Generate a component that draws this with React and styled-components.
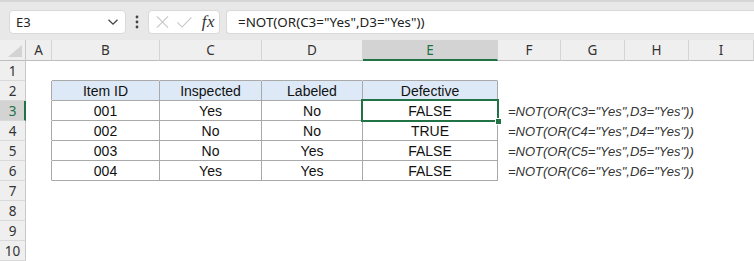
import React from "react";
import styled, { createGlobalStyle, css } from "styled-components";

const GREEN = "#217346";

const GlobalStyle = createGlobalStyle`
  html, body { margin: 0; padding: 0; background: #ffffff; }
  body { overflow: hidden; }
  * { box-sizing: border-box; }
`;

const Page = styled.div`
  width: 754px;
  height: 261px;
  display: flex;
  flex-direction: column;
  overflow: hidden;
  font-family: "Liberation Sans", Arial, sans-serif;
`;

const FormulaBar = styled.div`
  height: 40px;
  flex: none;
  display: flex;
  align-items: center;
  padding: 1px 0 0 9px;
  background: #e8e8e8;
  border-top: 2px solid #d6d6d6;
`;

const NameBox = styled.div`
  width: 117px;
  height: 24px;
  background: #ffffff;
  border: 1px solid #d9d9d9;
  border-radius: 4px;
  display: flex;
  align-items: center;
  justify-content: space-between;
  padding: 0 6px 0 6px;
  font-family: "Noto Sans", "Open Sans", sans-serif;
  font-size: 13px;
  color: #222;
`;

const Dots = styled.div`
  width: 22px;
  display: flex;
  justify-content: center;
  color: #444;
`;

const FxBox = styled.div`
  width: 72px;
  height: 24px;
  background: #ffffff;
  border: 1px solid #d9d9d9;
  border-radius: 4px;
  display: flex;
  align-items: center;
  padding: 0 4px 0 6px;
  gap: 6px;
`;

const Fx = styled.span`
  font-family: "Liberation Serif", "Times New Roman", serif;
  font-style: italic;
  font-size: 17px;
  color: #333;
  margin-left: 3px;
  letter-spacing: 0.5px;
`;

const FormulaInput = styled.div`
  flex: 1;
  height: 24px;
  margin-left: 6px;
  background: #ffffff;
  border: 1px solid #d9d9d9;
  border-right: none;
  border-radius: 4px 0 0 4px;
  display: flex;
  align-items: center;
  padding-left: 11px;
  font-family: "Noto Sans", "Open Sans", sans-serif;
  font-size: 13.4px;
  color: #222;
`;

const Sheet = styled.div`
  flex: 1;
  display: grid;
  background: #ffffff;
  grid-template-columns: 26px 26px 108px 102px 101px 135px 63px 64px 64px 1fr;
  grid-template-rows: 21px repeat(10, 20px);
`;

const headerFont = css`
  font-family: "Noto Sans", "Open Sans", sans-serif;
  font-size: 13.5px;
`;

const Corner = styled.div`
  position: relative;
  background: #efefef;
  border-right: 1px solid #c8c8c8;
  border-bottom: 1px solid #bdbdbd;
  &::after {
    content: "";
    position: absolute;
    right: 3px;
    bottom: 3px;
    width: 0;
    height: 0;
    border-left: 14px solid transparent;
    border-bottom: 12px solid #d3d3d3;
  }
`;

const ColHeader = styled.div`
  ${headerFont};
  display: flex;
  align-items: center;
  justify-content: center;
  background: ${(p) => (p.$active ? "#d3d3d3" : "#efefef")};
  color: ${(p) => (p.$active ? GREEN : "#333")};
  border-right: 1px solid #d4d4d4;
  border-bottom: ${(p) => (p.$active ? `2px solid ${GREEN}` : "1px solid #bdbdbd")};
  padding-top: ${(p) => (p.$active ? "1px" : "0")};
`;

const RowHeader = styled.div`
  ${headerFont};
  display: flex;
  align-items: center;
  justify-content: center;
  background: ${(p) => (p.$active ? "#d3d3d3" : "#efefef")};
  color: ${(p) => (p.$active ? GREEN : "#333")};
  border-right: ${(p) => (p.$active ? `2px solid ${GREEN}` : "1px solid #c8c8c8")};
  border-bottom: 1px solid #d9d9d9;
  padding-left: ${(p) => (p.$active ? "1px" : "0")};
`;

const LINE = "#a9a9a9";

const Cell = styled.div`
  position: relative;
  display: flex;
  align-items: center;
  justify-content: ${(p) => (p.$left ? "flex-start" : "center")};
  padding-left: ${(p) => (p.$left ? "10px" : "0")};
  padding-top: 1px;
  white-space: nowrap;
  overflow: visible;
  font-family: "Liberation Sans", Arial, sans-serif;
  font-size: ${(p) => (p.$italic ? "13px" : "14px")};
  font-style: ${(p) => (p.$italic ? "italic" : "normal")};
  color: ${(p) => (p.$italic ? "#333" : "#111")};
  background: ${(p) => (p.$fill ? "#dde9f6" : "transparent")};
  border-right: 1px solid ${(p) => (p.$bR ? LINE : "transparent")};
  border-bottom: 1px solid ${(p) => (p.$bB ? LINE : "transparent")};
  z-index: ${(p) => (p.$selected ? 2 : "auto")};
`;

const Selection = styled.div`
  position: absolute;
  top: -2px;
  left: -2px;
  right: -2px;
  bottom: -2px;
  border: 2px solid ${GREEN};
  pointer-events: none;
`;

const Handle = styled.div`
  position: absolute;
  right: -5px;
  bottom: -5px;
  width: 7px;
  height: 7px;
  background: ${GREEN};
  border: 1px solid #ffffff;
`;

const COLS = ["A", "B", "C", "D", "E", "F", "G", "H", "I"];

const TABLE = [
  ["Item ID", "Inspected", "Labeled", "Defective"],
  ["001", "Yes", "No", "FALSE"],
  ["002", "No", "No", "TRUE"],
  ["003", "No", "Yes", "FALSE"],
  ["004", "Yes", "Yes", "FALSE"],
];

const formula = (r) => `=NOT(OR(C${r}="Yes",D${r}="Yes"))`;

function ChevronDown() {
  return (
    <svg width="12" height="8" viewBox="0 0 12 8" fill="none">
      <path d="M1.5 1.8 L6 6.2 L10.5 1.8" stroke="#444" strokeWidth="1.3" />
    </svg>
  );
}

function VDots() {
  return (
    <svg width="4" height="14" viewBox="0 0 4 14">
      <circle cx="2" cy="2" r="1.4" fill="#444" />
      <circle cx="2" cy="7" r="1.4" fill="#444" />
      <circle cx="2" cy="12" r="1.4" fill="#444" />
    </svg>
  );
}

function CancelIcon() {
  return (
    <svg width="16" height="16" viewBox="0 0 16 16" fill="none">
      <path d="M2 2 L14 14 M14 2 L2 14" stroke="#c4c4c4" strokeWidth="1.1" />
    </svg>
  );
}

function EnterIcon() {
  return (
    <svg width="18" height="16" viewBox="0 0 18 16" fill="none">
      <path d="M1.5 8.5 L6.5 13.5 L16.5 3" stroke="#c4c4c4" strokeWidth="1.1" />
    </svg>
  );
}

export default function App() {
  const rows = [];
  for (let r = 1; r <= 10; r++) {
    const cells = [];
    cells.push(
      <RowHeader key="h" $active={r === 3}>
        {r}
      </RowHeader>
    );
    COLS.forEach((c, ci) => {
      const inTable = r >= 2 && r <= 6 && ci >= 1 && ci <= 4;
      const leftOfTable = r >= 2 && r <= 6 && ci === 0;
      const aboveTable = r === 1 && ci >= 1 && ci <= 4;
      let content = null;
      let italic = false;
      let left = false;
      if (inTable) content = TABLE[r - 2][ci - 1];
      if (ci === 5 && r >= 3 && r <= 6) {
        content = formula(r);
        italic = true;
        left = true;
      }
      const selected = r === 3 && c === "E";
      cells.push(
        <Cell
          key={c}
          $bR={inTable || leftOfTable}
          $bB={inTable || aboveTable}
          $fill={inTable && r === 2}
          $italic={italic}
          $left={left}
          $selected={selected}
        >
          {content}
          {selected && (
            <Selection>
              <Handle />
            </Selection>
          )}
        </Cell>
      );
    });
    rows.push(<React.Fragment key={r}>{cells}</React.Fragment>);
  }

  return (
    <>
      <GlobalStyle />
      <Page>
        <FormulaBar>
          <NameBox>
            <span>E3</span>
            <ChevronDown />
          </NameBox>
          <Dots>
            <VDots />
          </Dots>
          <FxBox>
            <CancelIcon />
            <EnterIcon />
            <Fx>fx</Fx>
          </FxBox>
          <FormulaInput>=NOT(OR(C3="Yes",D3="Yes"))</FormulaInput>
        </FormulaBar>
        <Sheet>
          <Corner />
          {COLS.map((c) => (
            <ColHeader key={c} $active={c === "E"}>
              {c}
            </ColHeader>
          ))}
          {rows}
        </Sheet>
      </Page>
    </>
  );
}
